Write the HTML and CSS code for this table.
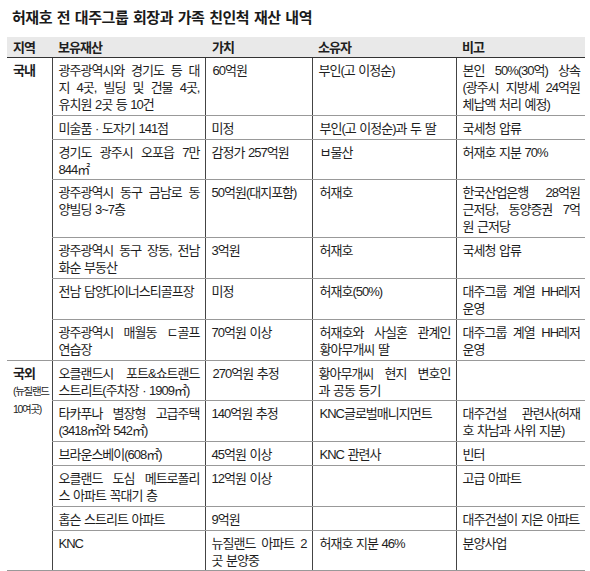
FILE: index.html
```html
<!DOCTYPE html>
<html lang="ko">
<head>
<meta charset="utf-8">
<title>허재호 전 대주그룹 회장과 가족 친인척 재산 내역</title>
<link rel="stylesheet" href="styles.css">
</head>
<body>
<div class="page">
  <h1 class="title">허재호 전 대주그룹 회장과 가족 친인척 재산 내역</h1>
  <table class="assets">
    <colgroup>
      <col class="c-region"><col class="c-asset"><col class="c-value"><col class="c-owner"><col class="c-note">
    </colgroup>
    <thead>
      <tr><th>지역</th><th>보유재산</th><th>가치</th><th>소유자</th><th>비고</th></tr>
    </thead>
    <tbody>
      <tr>
        <td class="region" rowspan="7">국내</td>
        <td><span class="ln">광주광역시와 경기도 등 대</span><span class="ln">지 4곳, 빌딩 및 건물 4곳,</span>유치원 2곳 등 10건</td>
        <td>60억원</td>
        <td>부인(고 이정순)</td>
        <td><span class="ln">본인 50%(30억) 상속</span><span class="ln">(광주시 지방세 24억원</span>체납액 처리 예정)</td>
      </tr>
      <tr>
        <td>미술품 · 도자기 141점</td>
        <td>미정</td>
        <td>부인(고 이정순)과 두 딸</td>
        <td>국세청 압류</td>
      </tr>
      <tr>
        <td><span class="ln">경기도 광주시 오포읍 7만</span>844㎡</td>
        <td>감정가 257억원</td>
        <td>ㅂ물산</td>
        <td>허재호 지분 70%</td>
      </tr>
      <tr>
        <td><span class="ln">광주광역시 동구 금남로 동</span>양빌딩 3~7층</td>
        <td>50억원(대지포함)</td>
        <td>허재호</td>
        <td><span class="ln">한국산업은행 28억원</span><span class="ln">근저당, 동양증권 7억</span>원 근저당</td>
      </tr>
      <tr>
        <td><span class="ln">광주광역시 동구 장동, 전남</span>화순 부동산</td>
        <td>3억원</td>
        <td>허재호</td>
        <td>국세청 압류</td>
      </tr>
      <tr>
        <td>전남 담양다이너스티골프장</td>
        <td>미정</td>
        <td>허재호(50%)</td>
        <td><span class="ln">대주그룹 계열 HH레저</span>운영</td>
      </tr>
      <tr>
        <td><span class="ln">광주광역시 매월동 ㄷ골프</span>연습장</td>
        <td>70억원 이상</td>
        <td><span class="ln">허재호와 사실혼 관계인</span>황아무개씨 딸</td>
        <td><span class="ln">대주그룹 계열 HH레저</span>운영</td>
      </tr>
      <tr>
        <td class="region" rowspan="6">국외<span class="sub">(뉴질랜드</span><span class="sub">10여곳)</span></td>
        <td><span class="ln">오클랜드시 포트&amp;쇼트랜드</span>스트리트(주차장 · 1909㎡)</td>
        <td>270억원 추정</td>
        <td><span class="ln">황아무개씨 현지 변호인</span>과 공동 등기</td>
        <td></td>
      </tr>
      <tr>
        <td><span class="ln">타카푸나 별장형 고급주택</span>(3418㎡와 542㎡)</td>
        <td>140억원 추정</td>
        <td>KNC글로벌매니지먼트</td>
        <td><span class="ln">대주건설 관련사(허재</span>호 차남과 사위 지분)</td>
      </tr>
      <tr>
        <td>브라운스베이(608㎡)</td>
        <td>45억원 이상</td>
        <td>KNC 관련사</td>
        <td>빈터</td>
      </tr>
      <tr>
        <td><span class="ln">오클랜드 도심 메트로폴리</span>스 아파트 꼭대기 층</td>
        <td>12억원 이상</td>
        <td></td>
        <td>고급 아파트</td>
      </tr>
      <tr>
        <td>홉슨 스트리트 아파트</td>
        <td>9억원</td>
        <td></td>
        <td class="nowrap">대주건설이 지은 아파트</td>
      </tr>
      <tr>
        <td>KNC</td>
        <td><span class="ln">뉴질랜드 아파트 2</span>곳 분양중</td>
        <td>허재호 지분 46%</td>
        <td>분양사업</td>
      </tr>
    </tbody>
  </table>
</div>
</body>
</html>
```
FILE: styles.css
```css
html, body {
  margin: 0;
  padding: 0;
  background: #ffffff;
}

.page {
  padding: 0 5px 0 7px;
  font-family: "Liberation Sans", "Noto Sans CJK KR", sans-serif;
  color: #1e1e1e;
}

.title {
  margin: 0 0 9px 5px;
  padding-top: 8px;
  font-size: 15px;
  line-height: 20px;
  font-weight: bold;
  letter-spacing: -0.45px;
  word-spacing: 1px;
  color: #1a1a1a;
}

.assets {
  width: 578px;
  border-collapse: collapse;
  table-layout: fixed;
  font-size: 13px;
  line-height: 17px;
  letter-spacing: -1px;
  word-spacing: 1px;
}

.c-region { width: 45px; }
.c-asset { width: 153px; }
.c-value { width: 107px; }
.c-owner { width: 144px; }
.c-note { width: 129px; }

.assets th {
  background: #e9e9e9;
  text-align: left;
  font-weight: bold;
  height: 20px;
  padding: 0 6px;
  border-bottom: 1px solid #333333;
}

.assets th:nth-child(3) {
  padding-left: 7px;
}

.assets td {
  vertical-align: top;
  text-align: left;
  padding: 4px 5px 1.8px 6px;
  border-bottom: 1px solid #999999;
  border-left: 1px solid #444444;
}

.assets td:nth-child(3) {
  padding-left: 7px;
}

.assets td.region {
  border-left: none;
  font-weight: bold;
  padding-left: 6px;
  padding-right: 0;
}

.assets td.nowrap {
  white-space: nowrap;
}

.sub {
  display: block;
  font-size: 10.5px;
  line-height: 18px;
  font-weight: normal;
  letter-spacing: -1.3px;
}

.ln {
  display: block;
  text-align: justify;
  text-align-last: justify;
}
```
